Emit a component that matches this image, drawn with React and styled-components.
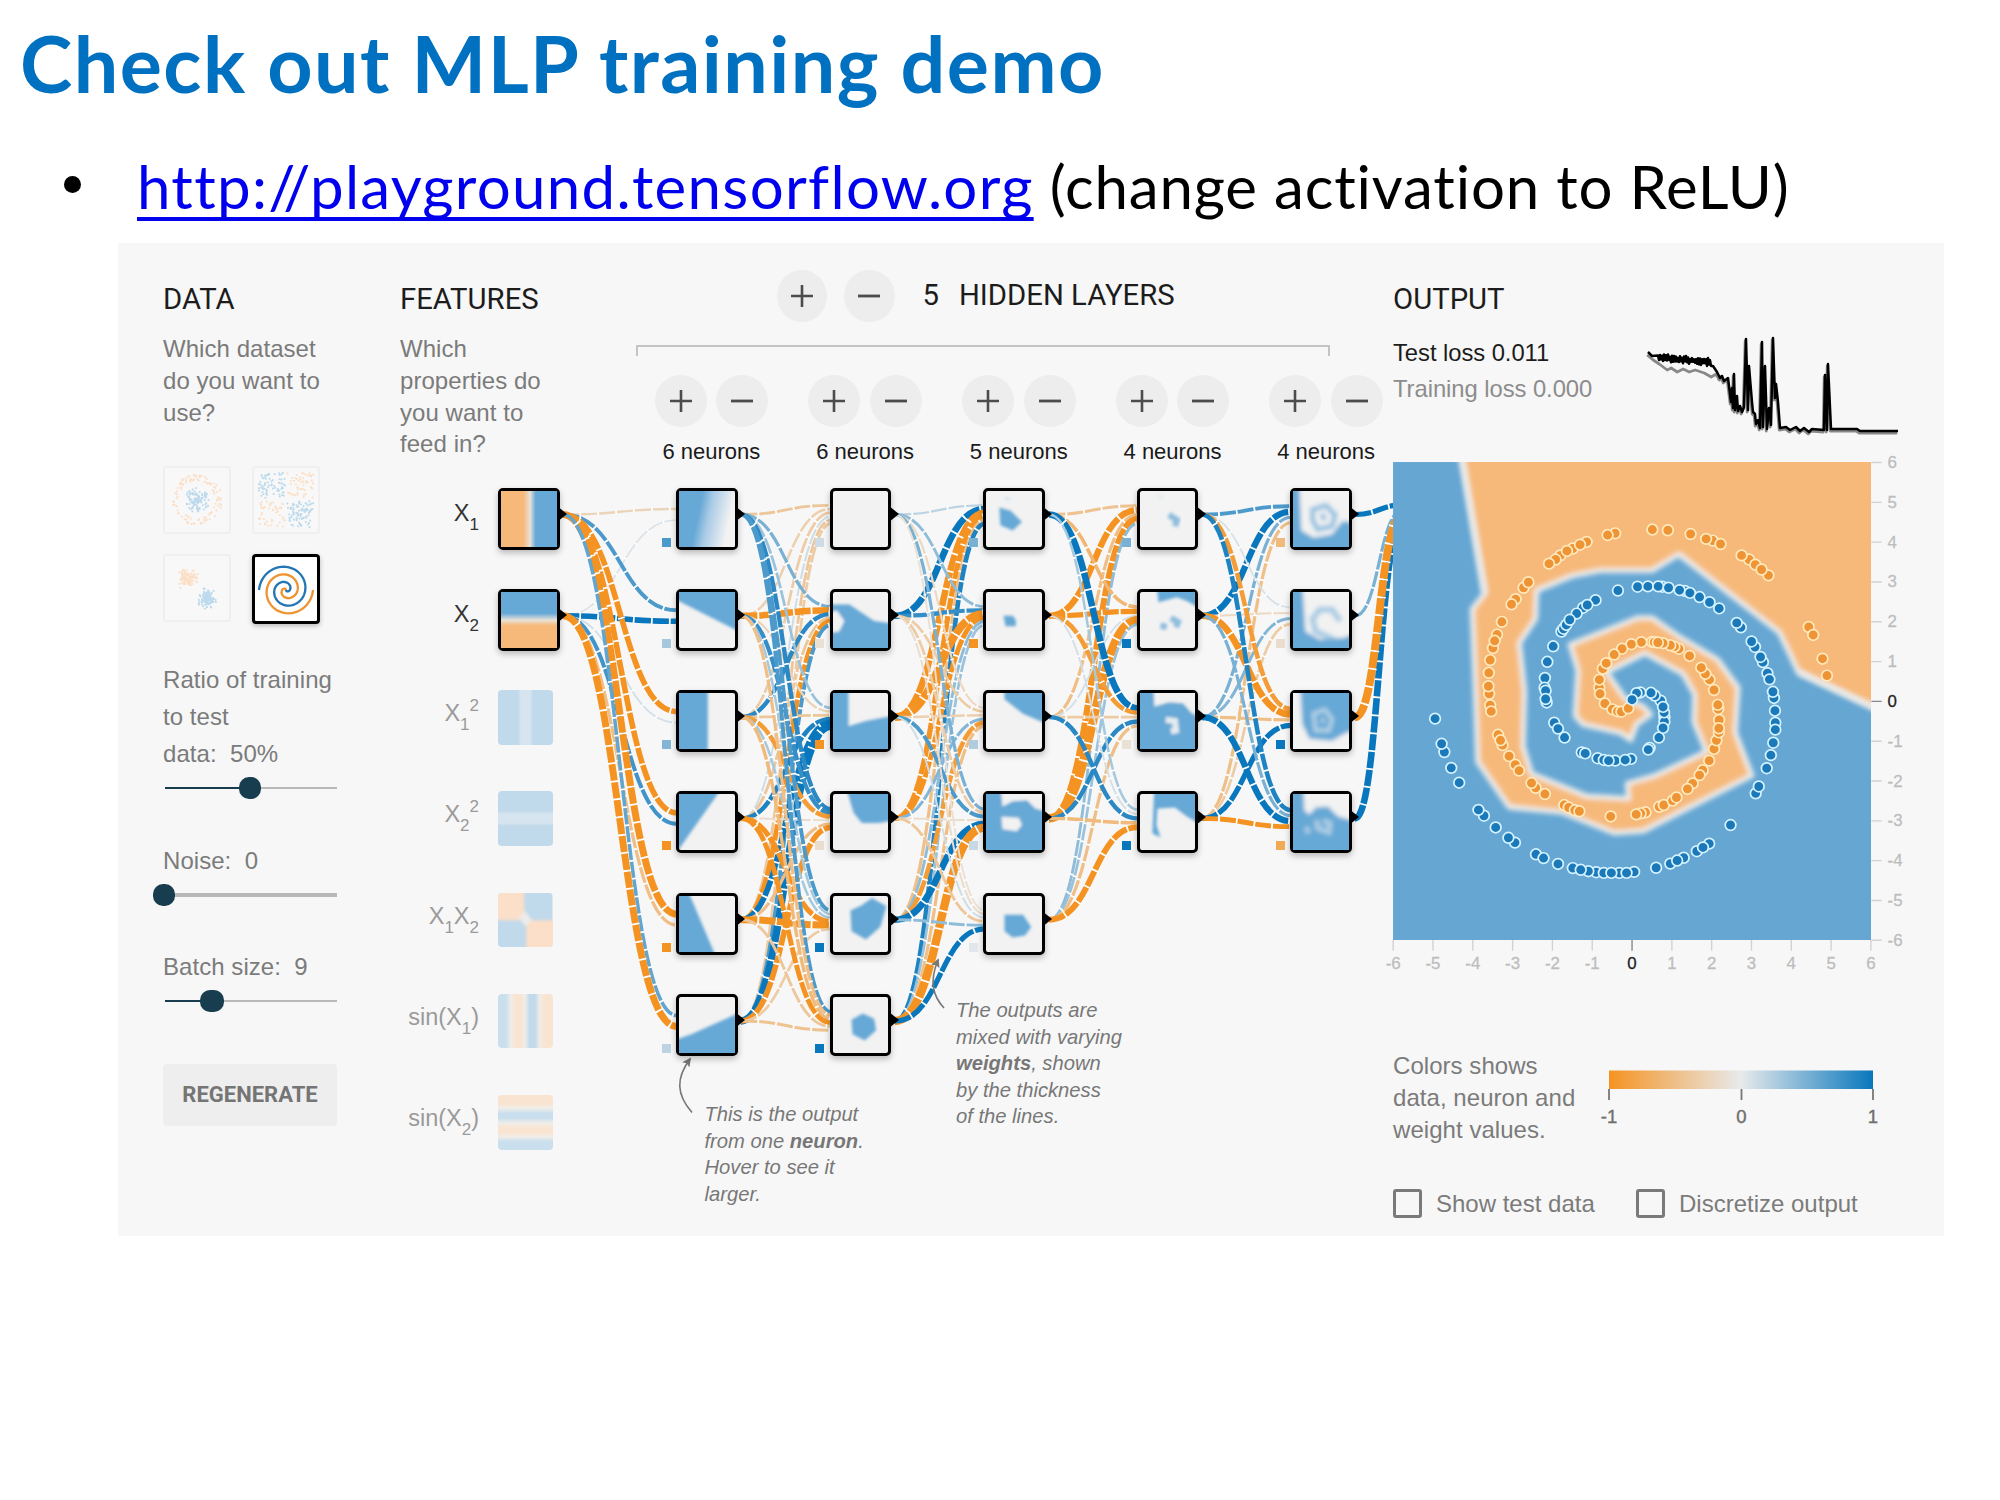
import React from "react";
import styled, { createGlobalStyle, css } from "styled-components";

const GlobalStyle = createGlobalStyle`
  * { box-sizing: border-box; }
  body { margin: 0; background: #fff; }
`;

const sans = '"Liberation Sans", Arial, sans-serif';
const roboto = 'Roboto, sans-serif';
const BLUE = "#0877bd";
const ORANGE = "#f59322";
const GREY = "#e8eaeb";
const SOFT_BLUE = "#66a8d6";
const SOFT_ORANGE = "#f6b97a";

/* ---------- slide ---------- */

const Slide = styled.main`
  width: 2000px;
  height: 1500px;
  overflow: hidden;
  background: #fff;
  display: flex;
  flex-direction: column;
  font-family: ${sans};
`;

const Title = styled.h1`
  margin: 13px 0 0 20px;
  height: 100px;
  font: 700 79px/100px Lato, sans-serif;
  letter-spacing: 1.45px;
  color: #0070c0;
  white-space: nowrap;
`;

const BulletLine = styled.div`
  display: flex;
  align-items: center;
  height: 76px;
  margin: 35px 0 0 64px;
  font: 400 60px/76px Lato, sans-serif;
  color: #000;
  white-space: pre;
`;

const Dot = styled.span`
  width: 17px;
  height: 17px;
  border-radius: 50%;
  background: #000;
  margin: 0 56px 4px 0;
`;

const Link = styled.a`
  color: #0000ee;
  letter-spacing: ${(p) => p.$spacing};
  text-decoration: underline;
  text-decoration-thickness: 4px;
  text-underline-offset: 8px;
  text-decoration-skip-ink: none;
`;

const Remark = styled.span`
  letter-spacing: ${(p) => p.$spacing};
`;

const Panel = styled.section`
  width: 1826px;
  height: 993px;
  margin: 19px 0 0 118px;
  padding-left: 45px;
  background: #f7f7f7;
  display: grid;
  grid-template-columns: 237px 993px 1fr;
  position: relative;
`;

const Heading = styled.h2`
  margin: 0;
  font: 400 29.3px/32px ${roboto};
  color: #1c1c1c;
`;

const Para = styled.p`
  margin: ${(p) => p.$mt || 0}px 0 0;
  width: ${(p) => p.$w || 175}px;
  font-size: 24px;
  line-height: ${(p) => p.$lh || 31.8}px;
  letter-spacing: 0.05px;
  color: #7b7b7b;
  white-space: pre;
`;

/* ---------- data column ---------- */

const DataColumn = styled.div`
  padding-top: 40px;
  width: 175px;
`;

const Thumbs = styled.div`
  display: grid;
  grid-template-columns: 68px 68px;
  gap: 19.5px 21px;
  margin-top: 38px;
`;

const Thumb = styled.div`
  width: 68px;
  height: 68px;
  border-radius: 4px;
  border: ${(p) => (p.$on ? "3.5px solid #000" : "2px solid #efefef")};
  background: ${(p) => (p.$on ? "#fff" : "#f8f8f8")};
  ${(p) => p.$on && css`
    height: 70px;
    box-shadow: 0 2px 5px rgba(0, 0, 0, 0.25);
  `}
  svg { display: block; width: 100%; height: 100%; }
`;

const SliderBox = styled.div`
  margin-top: 5px;
  height: 22px;
  width: 172px;
  margin-left: 1.5px;
  display: flex;
  align-items: center;
  position: relative;
`;

const Track = styled.div`
  width: 100%;
  height: ${(p) => p.$thick}px;
  background: linear-gradient(to right, #183d4e ${(p) => p.$at}px, #b9b9b9 ${(p) => p.$at}px);
`;

const Knob = styled.div`
  position: absolute;
  left: ${(p) => p.$at}px;
  top: 0;
  width: ${(p) => p.$w}px;
  height: 22px;
  margin-left: ${(p) => -p.$w / 2}px;
  border-radius: 10px;
  background: #183d4e;
`;

const Regenerate = styled.button`
  display: block;
  margin: 52px 0 0;
  width: 174px;
  height: 62px;
  border: 0;
  border-radius: 4px;
  background: #eeeeee;
  color: #757575;
  font: 700 22px/62px ${roboto};
  padding: 0;
`;

/* ---------- network ---------- */

const Network = styled.div`
  position: relative;
  width: 993px;
`;

const NetHeader = styled.div`
  display: flex;
  height: 244.5px;
`;

const FeatureIntro = styled.div`
  width: 235.5px;
  padding-top: 40px;
`;

const Hidden = styled.div`
  padding-top: 27px;
`;

const HiddenTop = styled.div`
  display: flex;
  align-items: center;
  height: 51px;
  padding-left: 141px;
`;

const HiddenTitle = styled(Heading)`
  white-space: pre;
  margin-top: -1px;
  margin-left: ${(p) => p.$ml || 0}px;
`;

const Bracket = styled.div`
  width: 694px;
  height: 11px;
  margin-top: 23.5px;
  border: 2px solid #c4c4c4;
  border-bottom: 0;
`;

const Controls = styled.div`
  display: flex;
  gap: 39.9px;
  margin: 19px 0 0 19px;
`;

const Control = styled.div`
  width: 113.8px;
  flex: none;
`;

const ButtonPair = styled.div`
  display: flex;
  justify-content: space-between;
`;

const Round = styled.button`
  width: ${(p) => p.$w || 52}px;
  height: 52px;
  margin-right: ${(p) => p.$mr || 0}px;
  padding: 0;
  border: 0;
  border-radius: 50%;
  background: #ededed;
  display: grid;
  place-items: center;
  svg { display: block; }
`;

const Count = styled.div`
  margin-top: 12.5px;
  font-size: 22px;
  line-height: 26px;
  text-align: center;
  color: #1a1a1a;
`;

const NetBody = styled.div`
  display: flex;
  align-items: flex-start;
`;

const LinkLayer = styled.svg`
  position: absolute;
  left: 0;
  top: 244.5px;
  pointer-events: none;
`;

const FeatureColumn = styled.div`
  position: relative;
  width: 159.5px;
  display: flex;
  flex-direction: column;
  gap: 39.3px;
`;

const FeatureRow = styled.div`
  display: flex;
  justify-content: space-between;
  height: 62px;
`;

const FeatureLabel = styled.div`
  width: 79px;
  display: flex;
  justify-content: flex-end;
  align-items: baseline;
  height: 36px;
  margin-top: ${(p) => (p.$on ? 10 : 8)}px;
  font-size: 23.5px;
  line-height: 31px;
  color: ${(p) => (p.$on ? "#333" : "#9a9a9a")};
`;

const Sub = styled.span`
  font-size: 17px;
  line-height: 1;
  position: relative;
  top: 9px;
`;

const Sup = styled(Sub)`
  top: -10px;
`;

const Column = styled.div`
  position: relative;
  width: 61.5px;
  flex: none;
  margin-left: ${(p) => p.$ml}px;
  display: flex;
  flex-direction: column;
  gap: 39.3px;
`;

const NodeBox = styled.div`
  position: relative;
  width: 61.5px;
  height: 62px;
  border: 3.5px solid #000;
  border-radius: 5px;
  background: #f2f2f2;
  box-shadow: 0 3px 6px rgba(0, 0, 0, 0.25);
  > svg:first-child { display: block; width: 100%; height: 100%; }
`;

const Port = styled.svg`
  position: absolute;
  left: 56px;
  top: 15px;
  width: 10px;
  height: 16px;
`;

const Bias = styled.i`
  position: absolute;
  left: -17.5px;
  top: 47px;
  width: 9px;
  height: 9px;
  background: ${(p) => p.$c};
`;

const Swatch = styled.div`
  width: 54.5px;
  height: 54.5px;
  margin-right: 7px;
  border-radius: 4px;
  overflow: hidden;
  background: ${(p) => p.$bg};
  svg { display: block; width: 100%; height: 100%; }
`;

const Note = styled.div`
  position: absolute;
  left: ${(p) => p.$x}px;
  top: ${(p) => p.$y}px;
  display: flex;
  flex-direction: column;
  font-size: 20.2px;
  line-height: 26.6px;
  font-style: italic;
  color: #777;
`;

const NoteLine = styled.div`
  display: flex;
  white-space: pre;
`;

/* ---------- output column ---------- */

const Output = styled.div`
  padding-top: 40px;
`;

const LossRow = styled.div`
  display: flex;
  margin-top: 15px;
  height: 120px;
`;

const Losses = styled.div`
  width: 247px;
  padding-top: 4.5px;
  font-size: 23.8px;
  line-height: 36px;
  color: #1c1c1c;
  letter-spacing: -0.05px;
`;

const Training = styled.div`
  color: #8c8c8c;
`;

const ChartSvg = styled.svg`
  display: block;
  overflow: visible;
  font-family: ${sans};
`;

const LegendRow = styled.div`
  display: flex;
  height: 96px;
  margin-top: 59.5px;
`;

const Checks = styled.div`
  display: flex;
  align-items: center;
  margin-top: 43px;
  height: 29px;
`;

const Check = styled.label`
  display: flex;
  align-items: center;
  font-size: 24px;
  line-height: 29px;
  color: #7b7b7b;
  width: ${(p) => p.$w}px;
  white-space: nowrap;
`;

const Box = styled.span`
  width: 29px;
  height: 29px;
  margin-right: 14px;
  border: 3px solid #7a7a7a;
  border-radius: 3px;
`;

/* ---------- data ---------- */

const mix = (a, b, t) => {
  const p = (h, i) => parseInt(h.slice(1 + i * 2, 3 + i * 2), 16);
  return `rgb(${[0, 1, 2].map((i) => Math.round(p(a, i) + (p(b, i) - p(a, i)) * t)).join(",")})`;
};
const weightColor = (w) => mix(GREY, w < 0 ? ORANGE : BLUE, Math.min(1, Math.abs(w)));

const WEIGHTS = [
  [[-0.25, 0.06], [0.7, 1.2], [-1.2, 0.1], [-1.2, 0.75], [-1.6, -0.5], [0.6, -1.6]],
  [
    [-0.4, -0.3, -0.35, 0.12, -0.4, -0.35],
    [0.5, -1.5, 0.85, -0.4, -1.0, 0.7],
    [0.35, -0.25, -0.4, 0.9, 1.2, 1.7],
    [0.85, 0.8, -0.9, -0.15, -0.5, -1.2],
    [0.7, 0.3, 0.3, -1.1, -1.6, -0.35],
    [0.7, -0.5, -0.55, -1.0, -0.4, -0.45],
  ],
  [
    [0.2, 1.5, -1.5, -1.1, -0.5, 0.9],
    [0.4, 0.8, -1.9, -1.0, 0.4, 0.35],
    [-0.2, -0.35, -0.3, 0.45, -0.9, -0.5],
    [0.5, -0.35, 0.7, -0.15, 1.5, -2.0],
    [-0.12, -0.15, 0.12, -0.4, 0.4, 1.1],
  ],
  [
    [-0.45, -1.4, -0.5, -1.4, 0.4],
    [-0.6, -1.1, 0.1, -2.1, 0.35],
    [1.5, -0.9, -0.35, 0.85, -0.5],
    [0.3, 0.1, 0.85, -0.55, -1.3],
  ],
  [
    [0.7, 1.4, 0.5, -0.5],
    [0.08, -0.2, 0.45, -0.35],
    [-0.9, -1.5, -0.5, 1.1],
    [0.9, 0.5, 1.4, -1.0],
  ],
];

const COL_X = [98, 276, 430, 584, 736.7, 890];
const ROW = 101.3;
const PORT_Y = 26.5;

function buildLinks() {
  const out = [];
  WEIGHTS.forEach((layer, l) => {
    layer.forEach((ins, row) => {
      ins.forEach((w, i) => {
        const n = ins.length;
        const sx = COL_X[l] + 65;
        const sy = PORT_Y + i * ROW;
        const tx = COL_X[l + 1] + 1;
        const ty = PORT_Y + row * ROW + ((i - (n - 1) / 2) / n) * 22;
        out.push({ sx, sy, tx, ty, w });
      });
    });
  });
  [[3, 1.5, 34], [0, 1.1, 17], [1, 0.5, 22], [2, -1.9, 26]].forEach(([i, w, ty]) => {
    out.push({ sx: COL_X[5] + 65, sy: PORT_Y + i * ROW, tx: 1003, ty, w });
  });
  return out;
}
const LINKS = buildLinks();

const B = (d) => ({ d, fill: SOFT_BLUE });
const W = (d) => ({ d, fill: "#f2f2f2" });
const BS = (d, w, o = 1) => ({ d, stroke: SOFT_BLUE, w, o });
const WS = (d, w, o = 1) => ({ d, stroke: "#f2f2f2", w, o });
const ALL = B("M-9-9H64V64H-9Z");

const NODES = [
  {
    bias: [0.7, 0.3, 0.45, -1, -1, 0.2],
    art: [
      "fade",
      [B("M-9-9H64V41L0 9L-9 5Z")],
      [B("M-9-9H28V64H-9Z")],
      [B("M-9-9H44L0 53L-9 64Z")],
      [B("M-9-9H7L34 54L38 64H-9Z")],
      [B("M-9 43L12 36L64 13V64H-9Z")],
    ],
  },
  {
    bias: [0.12, -0.12, -1, -0.15, 1, 1],
    art: [
      [],
      [B("M-9 12H16L40 28L64 31V64H-9Z"), W("M-9 20L4 18L11 28L6 38L-9 40Z")],
      [B("M-9-9H15V32L32 27L64 21V64H-9Z")],
      [B("M12-9H64V25L44 28H28L20 18Z")],
      [B("M17 14L28 9L38 2L52 10L46 30L32 42L18 34Z")],
      [B("M18 22L29 16L40 21L42 32L31 42L19 36Z")],
    ],
  },
  {
    bias: [0.5, -1, 0.25, 0.15, 0.03],
    art: [
      [B("M13 16L24 19L35 30L26 38L14 33Z"), BS("M18 7L24 8", 3, 0.2)],
      [B("M17 23H26L29 27V33H19Z")],
      [B("M18-9H64V32L36 20L18 6Z")],
      [ALL, W("M14-9H64V18L48 14L40 6L26 7L16 12Z"), W("M15 22L32 23L35 30L30 36L16 34Z")],
      [B("M18 18H36L44 30L38 38L26 40L18 34Z")],
    ],
  },
  {
    bias: [0.5, 1, -0.12, 1],
    art: [
      [BS("M28 23L36 28L34 34", 6, 0.7), BS("M17 5L23 6", 3, 0.12)],
      [B("M16-9H64V19L46 9L36 5L18 10Z"), BS("M30 25L37 29L35 34M20 32L26 34", 6, 0.7)],
      [ALL, W("M13-9H64V26L50 19L42 10L28 9L14 13Z"), WS("M25 26L34 27L35 36L30 37", 6, 0.9)],
      [B("M14-9H64V32L46 22L34 13L17 14L16 30L20 42L12 38Z")],
    ],
  },
  {
    bias: [-0.55, -0.15, 1, -0.75],
    art: [
      [ALL, W("M6-9H64V31L48 29L38 42L20 45L8 38Z"), BS("M19 18L32 14L41 23L38 34L24 37L19 28ZM28 22L31 28", 5, 0.65)],
      [ALL, W("M9-9H64V38L50 44L26 46L12 38Z"), BS("M40 46L22 38L19 26L26 17L38 17L46 28", 6, 0.5)],
      [ALL, W("M-9-9H7L9 30L16 44L38 46L52 38L64 36V64H-9Z"), WS("M20 20L31 16L38 25L35 36L22 36ZM29 24V29", 4, 0.55)],
      [ALL, W("M10-9H64V27L44 22L34 12L22 13L16 20L11 16Z"), WS("M23 25L24 33L35 37L36 28L29 26M13 32L15 38", 5, 0.5)],
    ],
  },
];

const LAYER_COUNTS = [6, 6, 5, 4, 4];

/* ---------- pieces ---------- */

function Plus() {
  return (
    <svg width="22" height="22" viewBox="0 0 22 22">
      <path d="M0 11H22M11 0V22" stroke="#4c4c4c" strokeWidth="2.6" />
    </svg>
  );
}

function Minus() {
  return (
    <svg width="22" height="22" viewBox="0 0 22 22">
      <path d="M0 11H22" stroke="#4c4c4c" strokeWidth="2.8" />
    </svg>
  );
}

function NodeArt({ art, filter }) {
  return (
    <svg viewBox="0 0 54 54" preserveAspectRatio="none">
      {art === "fade" ? (
        <rect width="54" height="54" fill="url(#fade)" />
      ) : (
        <g filter={`url(#${filter})`}>
          {art.map((s, i) => (
            <path key={i} d={s.d} fill={s.fill || "none"} stroke={s.stroke} strokeWidth={s.w} opacity={s.o} />
          ))}
        </g>
      )}
    </svg>
  );
}

function Node({ art, bias, filter = "soft", children }) {
  return (
    <NodeBox>
      {children || <NodeArt art={art} filter={filter} />}
      <Port viewBox="0 0 10 16">
        <path d="M0 0L10 8L0 16Z" fill="#000" />
      </Port>
      {bias !== undefined && <Bias $c={weightColor(bias)} />}
    </NodeBox>
  );
}

let seed = 7;
const rnd = () => {
  seed = (seed * 16807) % 2147483647;
  return seed / 2147483647;
};
const THUMB_POINTS = (() => {
  const circle = [];
  for (let i = 0; i < 110; i++) {
    const a = rnd() * 6.283;
    const r = rnd() * 13;
    circle.push([33 + r * Math.cos(a), 33 + r * Math.sin(a), 1]);
    const q = 19 + rnd() * 7;
    circle.push([33 + q * Math.cos(a * 3), 33 + q * Math.sin(a * 3), 0]);
  }
  const xor = [];
  for (let i = 0; i < 260; i++) {
    const x = rnd() * 54 - 27;
    const y = rnd() * 54 - 27;
    xor.push([33 + x + Math.sign(x) * 1.2, 33 + y + Math.sign(y) * 1.2, x * y > 0 ? 1 : 0]);
  }
  const gauss = [];
  for (let i = 0; i < 110; i++) {
    const g = () => (rnd() + rnd() + rnd() - 1.5) * 8;
    gauss.push([23 + g(), 23 + g(), 0]);
    gauss.push([43 + g(), 44 + g(), 1]);
  }
  return [circle, xor, gauss];
})();

function ScatterThumb({ points }) {
  return (
    <Thumb>
      <svg viewBox="0 0 66 66">
        {points.map(([x, y, c], i) => (
          <circle key={i} cx={x} cy={y} r="1.1" fill={c ? "#bddaed" : "#fbdfc6"} />
        ))}
      </svg>
    </Thumb>
  );
}

function spiralPath(delta) {
  let d = "";
  for (let i = 0; i <= 120; i++) {
    const k = i / 120;
    const r = k * 27;
    const t = 1.75 * k * 2 * Math.PI + delta;
    d += `${i ? "L" : "M"}${(31 + r * Math.sin(t)).toFixed(1)} ${(32 + r * Math.cos(t)).toFixed(1)}`;
  }
  return d;
}

function Slider({ at, w = 22, thick = 2.6 }) {
  return (
    <SliderBox>
      <Track $thick={thick} $at={Math.max(0, at)} />
      <Knob $at={at} $w={w} />
    </SliderBox>
  );
}

const ORANGE_REGION =
  "M226-40L305 415L268 462L275 640L284 905L375 1037L530 1052L680 1112L765 1106L1080 945L1032 820L1040 690L980 608L870 543L790 487L750 487L552 565L575 640L567 772L590 797L700 822L728 842L745 797L786 768L765 745L712 722L658 645L770 590L880 650L914 710L912 790L948 876L800 945L718 968L722 1012L600 1005L440 940L416 860L420 700L405 560L452 490L455 408L560 365L640 350L790 350L868 303L1160 530L1215 645L1470 765V-40Z";

const ORANGE_DOTS = [
  [683,242],[661,247],[791,231],[836,233],[902,244],[966,263],[947,258],[989,273],[600,267],[560,286],[581,275],[524,306],[543,293],[510,318],[491,330],[1072,318],[1050,306],[1090,333],[1128,364],[1108,347],[417,400],[431,384],[394,433],[382,448],[354,499],[340,536],[328,575],[333,554],[320,610],[316,647],[317,708],[315,686],[320,741],[323,759],[343,827],[356,857],[350,843],[375,889],[393,914],[404,931],[452,981],[440,967],[479,999],[535,1031],[548,1038],[566,1046],[579,1049],[670,1064],[771,1052],[757,1055],[744,1058],[811,1036],[824,1031],[850,1018],[861,1009],[908,968],[893,984],[937,930],[928,944],[956,902],[970,868],[977,843],[984,820],[985,784],[984,808],[982,752],[981,740],[970,697],[957,667],[945,650],[933,632],[899,598],[868,577],[855,571],[843,567],[822,561],[790,557],[797,558],[807,559],[759,558],[730,564],[703,577],[680,594],[647,635],[657,619],[637,690],[637,667],[639,708],[653,736],[675,753],[690,759],[701,760],[721,750],[1245,514],[1258,537],[1285,606],[1298,655],
];
const BLUE_DOTS = [
  [691,408],[626,436],[590,458],[602,450],[571,475],[527,527],[533,519],[541,508],[551,493],[503,570],[486,615],[479,662],[478,690],[484,733],[481,699],[481,723],[506,792],[517,809],[536,835],[586,878],[596,881],[632,895],[650,900],[683,902],[664,902],[729,897],[712,900],[783,865],[779,870],[810,835],[826,776],[826,789],[822,807],[825,762],[815,728],[822,746],[798,713],[787,705],[756,704],[745,706],[732,725],[748,397],[778,396],[820,397],[808,396],[838,400],[885,409],[870,407],[900,415],[928,427],[957,442],[985,460],[1048,515],[1036,502],[1089,572],[1079,556],[1112,616],[1105,601],[1125,648],[1131,666],[1144,720],[1141,702],[1147,757],[1148,792],[1148,812],[1142,850],[1135,886],[1123,924],[1091,997],[1100,977],[1018,1089],[920,1165],[956,1143],[938,1154],[882,1184],[843,1201],[863,1192],[802,1213],[738,1225],[695,1228],[716,1228],[628,1226],[650,1228],[672,1228],[605,1223],[560,1214],[583,1219],[517,1202],[453,1174],[475,1185],[392,1140],[373,1126],[336,1096],[302,1062],[286,1045],[230,966],[207,923],[187,877],[179,853],[160,780],
];

function Heatmap() {
  const ticks = Array.from({ length: 13 }, (_, i) => i - 6);
  return (
    <ChartSvg width="527" height="540" viewBox="38 0 1530 1568">
      <defs>
        <filter id="edge" x="-10%" y="-10%" width="120%" height="120%">
          <feGaussianBlur stdDeviation="7" />
        </filter>
        <clipPath id="plot">
          <rect x="38" y="35" width="1388" height="1388" />
        </clipPath>
      </defs>
      <g clipPath="url(#plot)">
        <rect x="38" y="35" width="1388" height="1388" fill="#65a6d3" />
        <path d={ORANGE_REGION} fill={SOFT_ORANGE} stroke="#eeedea" strokeWidth="15" strokeLinejoin="round" filter="url(#edge)" />
        <path d="M228-40L302 415M1215 645L1440 750" fill="none" stroke="#eeedea" strokeWidth="16" filter="url(#edge)" opacity=".7" />
      </g>
      {ORANGE_DOTS.map(([x, y], i) => (
        <circle key={i} cx={x} cy={y} r="15.5" fill="#ee9434" stroke="#ffe9bd" strokeWidth="5" />
      ))}
      {BLUE_DOTS.map(([x, y], i) => (
        <circle key={i} cx={x} cy={y} r="15.5" fill="#1b79b9" stroke="#d5f3ff" strokeWidth="5" />
      ))}
      {ticks.map((t) => {
        const x = 732 + t * 115.6;
        const y = 730 - t * 115.6;
        const c = t === 0 ? "#222" : "#bdbdbd";
        return (
          <g key={t} fill={c} stroke={c} strokeWidth="0.8" fontSize="49">
            <path d={`M${x} 1423V1454M1427 ${y}H1457`} stroke={t === 0 ? "#888" : "#d2d2d2"} strokeWidth="4" />
            <text x={x} y="1508" textAnchor="middle">{t}</text>
            <text x="1474" y={y + 16}>{t}</text>
          </g>
        );
      })}
    </ChartSvg>
  );
}

function LossChart() {
  const noisy = [];
  for (let x = 1658; x <= 1711; x += 1) {
    const mid = 357 + ((x - 1656) / 55) * 5;
    noisy.push(`L${x} ${(mid + (noisy.length % 2 ? 3.4 : -3) * (0.3 + rnd())).toFixed(1)}`);
  }
  const tail =
    "L1717 372L1720 378L1722 376L1724 381L1728 378L1731 402L1732 388L1733 408L1734 374L1735 410L1737 396L1738 411L1740 406L1742 412L1744 407L1746 339L1748 410L1749 366L1752 402L1753 412L1755 414L1756 424L1758 420L1760 428L1762 342L1763 427L1765 366L1767 429L1769 408L1771 425L1773 338L1775 398L1776 384L1778 402L1780 428L1786 427L1790 430L1796 427L1800 431L1804 428L1809 432L1812 429L1824 430L1825 375L1827 430L1828 364L1831 429L1857 429L1860 431L1898 431";
  return (
    <ChartSvg width="265" height="120" viewBox="1640 330 265 120" fill="none" strokeLinejoin="round">
      <path d={`M1648 353L1654 358L1660 362L1668 368L1672 366L1678 370L1684 367L1690 370L1696 368L1705 371L1712 375${tail}`} transform="translate(-.8 2)" stroke="#888" strokeWidth="2.8" />
      <path d={`M1648 352L1652 356${noisy.join("")}L1713 366${tail}`} stroke="#000" strokeWidth="2.5" />
    </ChartSvg>
  );
}

function Legend() {
  return (
    <ChartSvg width="290" height="96" viewBox="1595 1051 290 96">
      <defs>
        <linearGradient id="scale">
          <stop offset="0" stopColor={ORANGE} />
          <stop offset=".5" stopColor={GREY} />
          <stop offset="1" stopColor={BLUE} />
        </linearGradient>
      </defs>
      <rect x="1609" y="1071.5" width="264" height="18.5" fill="url(#scale)" />
      <path d="M1609 1090V1101M1741.5 1090V1101M1873 1090V1101" stroke="#777" strokeWidth="1.8" />
      <g fontSize="18.5" fill="#6f6f6f" stroke="#6f6f6f" strokeWidth=".4" textAnchor="middle">
        <text x="1609" y="1123.5">-1</text>
        <text x="1741.5" y="1123.5">0</text>
        <text x="1873" y="1123.5">1</text>
      </g>
    </ChartSvg>
  );
}

const blueStripe = "#c0d9eb";
const peach = "#fbdfc8";
const pale = "#f0ede8";

const FEATURES = [
  { label: <>X<Sub>1</Sub></>, on: true, bg: `linear-gradient(to right, ${SOFT_ORANGE} 40%, #e8e2d8 52%, ${SOFT_BLUE} 62%)` },
  { label: <>X<Sub>2</Sub></>, on: true, bg: `linear-gradient(to bottom, ${SOFT_BLUE} 38%, #e8e2d8 50%, ${SOFT_ORANGE} 60%)` },
  { label: <>X<Sub>1</Sub><Sup>2</Sup></>, bg: `linear-gradient(to right, ${blueStripe} 36%, #d6e4ef 42%, #d6e4ef 58%, ${blueStripe} 64%)` },
  { label: <>X<Sub>2</Sub><Sup>2</Sup></>, bg: `linear-gradient(to bottom, ${blueStripe} 36%, #d6e4ef 42%, #d6e4ef 58%, ${blueStripe} 64%)` },
  { label: <>X<Sub>1</Sub>X<Sub>2</Sub></>, product: true },
  { label: <>sin(X<Sub>1</Sub>)</>, bg: `linear-gradient(to right, #c9dfee 14%, ${pale} 24%, #f9e4d1 32%, #f9e4d1 42%, ${pale} 49%, ${blueStripe} 58%, ${blueStripe} 67%, ${pale} 76%, #f9e4d1 84%)` },
  { label: <>sin(X<Sub>2</Sub>)</>, bg: `linear-gradient(to bottom, #f9e4d1 16%, ${pale} 24%, #c9dfee 33%, #c9dfee 42%, ${pale} 51%, #f9e4d1 60%, #f9e4d1 68%, ${pale} 76%, #c9dfee 85%)` },
];

const FeatureFill = styled.div`
  width: 100%;
  height: 100%;
  background: ${(p) => p.$bg};
`;

function App() {
  return (
    <>
      <GlobalStyle />
      <Slide>
        <Title>Check out MLP training demo</Title>
        <BulletLine>
          <Dot />
          <Link $spacing="1.3px">http://playground.tensorflow.org</Link>
          <Remark $spacing="0.85px"> (change activation to ReLU)</Remark>
        </BulletLine>
        <Panel>
          <DataColumn>
            <Heading>DATA</Heading>
            <Para $mt={18}>{"Which dataset\ndo you want to\nuse?"}</Para>
            <Thumbs>
              {THUMB_POINTS.map((p, i) => (
                <ScatterThumb key={i} points={p} />
              ))}
              <Thumb $on>
                <svg viewBox="0 0 62 62" fill="none" strokeWidth="2.3">
                  <path d={spiralPath(Math.PI)} stroke="#ef932f" />
                  <path d={spiralPath(0)} stroke="#2376b3" />
                </svg>
              </Thumb>
            </Thumbs>
            <Para $mt={37} $lh={37}>{"Ratio of training\nto test\ndata:\u00a0\u00a050%"}</Para>
            <Slider at={85} />
            <Para $mt={43} $lh={37}>Noise:&nbsp;&nbsp;0</Para>
            <Slider at={-1} thick={4} />
            <Para $mt={42} $lh={37}>Batch size:&nbsp;&nbsp;9</Para>
            <Slider at={47} w={24} />
            <Regenerate>REGENERATE</Regenerate>
          </DataColumn>

          <Network>
            <NetHeader>
              <FeatureIntro>
                <Heading>FEATURES</Heading>
                <Para $mt={18}>{"Which\nproperties do\nyou want to\nfeed in?"}</Para>
              </FeatureIntro>
              <Hidden>
                <HiddenTop>
                  <Round $w={50} $mr={17}><Plus /></Round>
                  <Round $w={51} $mr={28}><Minus /></Round>
                  <HiddenTitle>5</HiddenTitle>
                  <HiddenTitle $ml={20}>HIDDEN LAYERS</HiddenTitle>
                </HiddenTop>
                <Bracket />
                <Controls>
                  {LAYER_COUNTS.map((n, i) => (
                    <Control key={i}>
                      <ButtonPair>
                        <Round><Plus /></Round>
                        <Round><Minus /></Round>
                      </ButtonPair>
                      <Count>{n} neurons</Count>
                    </Control>
                  ))}
                </Controls>
              </Hidden>
            </NetHeader>

            <LinkLayer width="993" height="700" viewBox="0 0 993 700" fill="none">
              <defs>
                <filter id="soft" x="-20%" y="-20%" width="140%" height="140%">
                  <feGaussianBlur stdDeviation="1.6" />
                </filter>
                <filter id="softer" x="-20%" y="-20%" width="140%" height="140%">
                  <feGaussianBlur stdDeviation="2.1" />
                </filter>
                <linearGradient id="fade" gradientTransform="rotate(12)">
                  <stop offset=".42" stopColor={SOFT_BLUE} />
                  <stop offset=".62" stopColor="#a9cbe6" />
                  <stop offset="1" stopColor="#f2f2f2" />
                </linearGradient>
                <marker id="tip" viewBox="0 0 10 10" refX="8" refY="5" markerWidth="11" markerHeight="9" markerUnits="userSpaceOnUse" orient="auto">
                  <path d="M0 0L10 5L0 10L2 5Z" fill="#777" />
                </marker>
              </defs>
              {LINKS.map(({ sx, sy, tx, ty, w }, i) => {
                const mx = (sx + tx) / 2;
                const d = `M${sx} ${sy}C${mx} ${sy} ${mx} ${ty} ${tx} ${ty}`;
                const width = 1.5 + Math.abs(w) * 3.4;
                return (
                  <g key={i}>
                    <path d={d} stroke="#fff" strokeWidth={width + 1.2} strokeDasharray="1.8 16.2" strokeDashoffset="1.8" />
                    <path d={d} stroke={weightColor(w)} strokeWidth={width} strokeDasharray="16.2 1.8" />
                  </g>
                );
              })}
              <path d="M292 624.5C276 606 276 590 290 571" stroke="#777" strokeWidth="1.6" markerEnd="url(#tip)" />
              <path d="M544 520C533 508 529 494 538 472" stroke="#777" strokeWidth="1.6" markerEnd="url(#tip)" />
            </LinkLayer>

            <NetBody>
              <FeatureColumn>
                {FEATURES.map((f, i) => (
                  <FeatureRow key={i}>
                    <FeatureLabel $on={f.on}>{f.label}</FeatureLabel>
                    {f.on ? (
                      <Node><FeatureFill $bg={f.bg} /></Node>
                    ) : (
                      <Swatch $bg={f.bg}>
                        {f.product && (
                          <svg viewBox="0 0 54 54">
                            <rect width="54" height="54" fill={blueStripe} />
                            <g filter="url(#soft)">
                              <path d="M-9-9H26V27H-9ZM28 27H63V63H28Z" fill={peach} />
                              <path d="M20 24L27 18L34 27L27 33Z" fill="#ecebea" />
                            </g>
                          </svg>
                        )}
                      </Swatch>
                    )}
                  </FeatureRow>
                ))}
              </FeatureColumn>
              {NODES.map((col, i) => (
                <Column key={i} $ml={i === 0 ? 116.5 : 92}>
                  {col.art.map((art, j) => (
                    <Node key={j} art={art} bias={col.bias[j]} filter={i === 4 ? "softer" : "soft"} />
                  ))}
                </Column>
              ))}
            </NetBody>

            <Note $x={304.5} $y={858}>
              <NoteLine>This is the output</NoteLine>
              <NoteLine>{"from one "}<b>neuron</b>.</NoteLine>
              <NoteLine>Hover to see it</NoteLine>
              <NoteLine>larger.</NoteLine>
            </Note>
            <Note $x={556} $y={754}>
              <NoteLine>The outputs are</NoteLine>
              <NoteLine>mixed with varying</NoteLine>
              <NoteLine><b>weights</b>, shown</NoteLine>
              <NoteLine>by the thickness</NoteLine>
              <NoteLine>of the lines.</NoteLine>
            </Note>
          </Network>

          <Output>
            <Heading>OUTPUT</Heading>
            <LossRow>
              <Losses>
                Test loss 0.011
                <Training>Training loss 0.000</Training>
              </Losses>
              <LossChart />
            </LossRow>
            <Heatmap />
            <LegendRow>
              <Para $w={202} $lh={32}>{"Colors shows\ndata, neuron and\nweight values."}</Para>
              <Legend />
            </LegendRow>
            <Checks>
              <Check $w={243}><Box />Show test data</Check>
              <Check $w={240}><Box />Discretize output</Check>
            </Checks>
          </Output>
        </Panel>
      </Slide>
    </>
  );
}

export default App;
